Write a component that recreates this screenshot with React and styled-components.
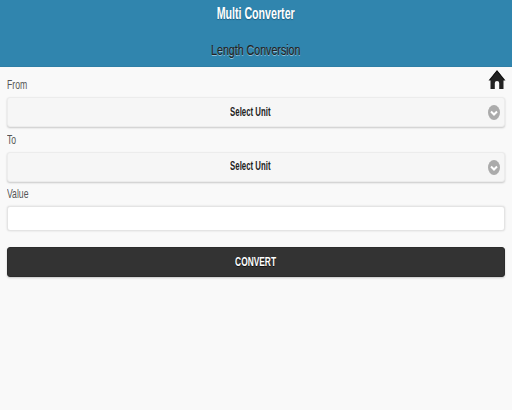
import React from 'react'
import styled, { createGlobalStyle } from 'styled-components'

const Global = createGlobalStyle`
  html, body { margin: 0; padding: 0; background: #f9f9f9; }
  body { font-family: "Liberation Sans", Arial, sans-serif; }
`

const Page = styled.div`
  width: 512px;
  height: 410px;
  overflow: hidden;
  background: #f9f9f9;
`

const Header = styled.header`
  height: 67px;
  background: #3085ae;
  border-bottom: 1px solid #2f7fa6;
  box-sizing: border-box;
  display: flex;
  flex-direction: column;
  align-items: center;
`

// the whole screen is squeezed sideways, so text is narrowed with scaleX
const Squeezed = styled.span`
  display: inline-block;
  white-space: nowrap;
  transform: scaleX(${p => p.$x});
  transform-origin: ${p => p.$origin || 'center'};
`

const Title = styled.h1`
  margin: 5px 0 0;
  font-size: 16px;
  line-height: 18px;
  font-weight: bold;
  color: #fff;
  text-shadow: 0 1px 1px #1f5f80;
`

const SubTitle = styled.h2`
  margin: 18px 0 0;
  font-size: 14px;
  line-height: 18px;
  font-weight: normal;
  color: #222;
  -webkit-text-stroke: 0.2px #222;
  text-shadow: 0 1px 0 #8fc0d8;
`

const Content = styled.main`
  position: relative;
  padding: 11px 7px 0;
  display: flex;
  flex-direction: column;
`

const HomeLink = styled.a`
  position: absolute;
  top: 2px;
  right: 6px;
  width: 18px;
  height: 21px;
  display: block;
`

const Label = styled.label`
  display: block;
  height: 14px;
  font-size: 13px;
  line-height: 14px;
  color: #555;
  margin-bottom: ${p => p.$gap}px;
`

const SelectBox = styled.div`
  height: 30px;
  box-sizing: border-box;
  position: relative;
  display: flex;
  align-items: center;
  justify-content: center;
  padding-right: 11px;
  padding-bottom: ${p => p.$lift || 0}px;
  background: #f6f6f6;
  border: 1px solid #ececec;
  border-radius: 3px;
  box-shadow: 0 1px 2px rgba(0, 0, 0, 0.2);
  font-size: 12.5px;
  font-weight: bold;
  color: #222;
  margin-bottom: ${p => p.$gap}px;
`

const Arrow = styled.span`
  position: absolute;
  right: 4px;
  top: 7px;
  width: 12px;
  height: 15px;
  border-radius: 50%;
  background: #ababab;
  display: flex;
  align-items: center;
  justify-content: center;
`

const ValueInput = styled.input`
  display: block;
  height: 25px;
  box-sizing: border-box;
  width: 100%;
  background: #fff;
  border: 1px solid #e4e4e4;
  border-radius: 3px;
  box-shadow: 0 0 2px rgba(0, 0, 0, 0.15);
  outline: none;
  padding: 0 6px;
  margin-bottom: 16px;
`

const ConvertButton = styled.button`
  height: 30px;
  width: 100%;
  background: #333;
  border: 1px solid #2c2c2c;
  border-radius: 3px;
  box-shadow: 0 1px 2px rgba(0, 0, 0, 0.2);
  color: #fff;
  font-family: inherit;
  font-size: 12.5px;
  font-weight: bold;
  text-shadow: 0 1px 0 #111;
  padding: 0;
`

const Chevron = () => (
  <svg width="8" height="8" viewBox="0 0 8 8">
    <path d="M1 2.5 L4 5.5 L7 2.5" fill="none" stroke="#fff" strokeWidth="2" />
  </svg>
)

const HomeIcon = () => (
  <svg width="18" height="21" viewBox="0 0 18 21">
    <path
      fillRule="evenodd"
      d="M9 1 L17.5 11.5 L15.5 11.5 L15.5 20 L2.5 20 L2.5 11.5 L0.5 11.5 Z M6.8 20 L11.2 20 L11.2 14 Q11.2 12 9 12 Q6.8 12 6.8 14 Z"
      fill="#222"
    />
    <path d="M9 2 L16 11 M9 2 L2 11" stroke="#111" strokeWidth="1" fill="none" />
  </svg>
)

const UnitSelect = ({ gap, lift }) => (
  <SelectBox $gap={gap} $lift={lift}>
    <Squeezed $x={0.625}>Select Unit</Squeezed>
    <Arrow><Chevron /></Arrow>
  </SelectBox>
)

const FieldLabel = ({ children }) => (
  <Label $gap={5}>
    <Squeezed $x={0.665} $origin="left">{children}</Squeezed>
  </Label>
)

export default function App() {
  return (
    <Page>
      <Global />
      <Header>
        <Title><Squeezed $x={0.665}>Multi Converter</Squeezed></Title>
        <SubTitle><Squeezed $x={0.76}>Length Conversion</Squeezed></SubTitle>
      </Header>
      <Content>
        <HomeLink><HomeIcon /></HomeLink>
        <FieldLabel>From</FieldLabel>
        <UnitSelect gap={6} />
        <FieldLabel>To</FieldLabel>
        <UnitSelect gap={5} lift={2} />
        <FieldLabel>Value</FieldLabel>
        <ValueInput />
        <ConvertButton><Squeezed $x={0.67}>CONVERT</Squeezed></ConvertButton>
      </Content>
    </Page>
  )
}
